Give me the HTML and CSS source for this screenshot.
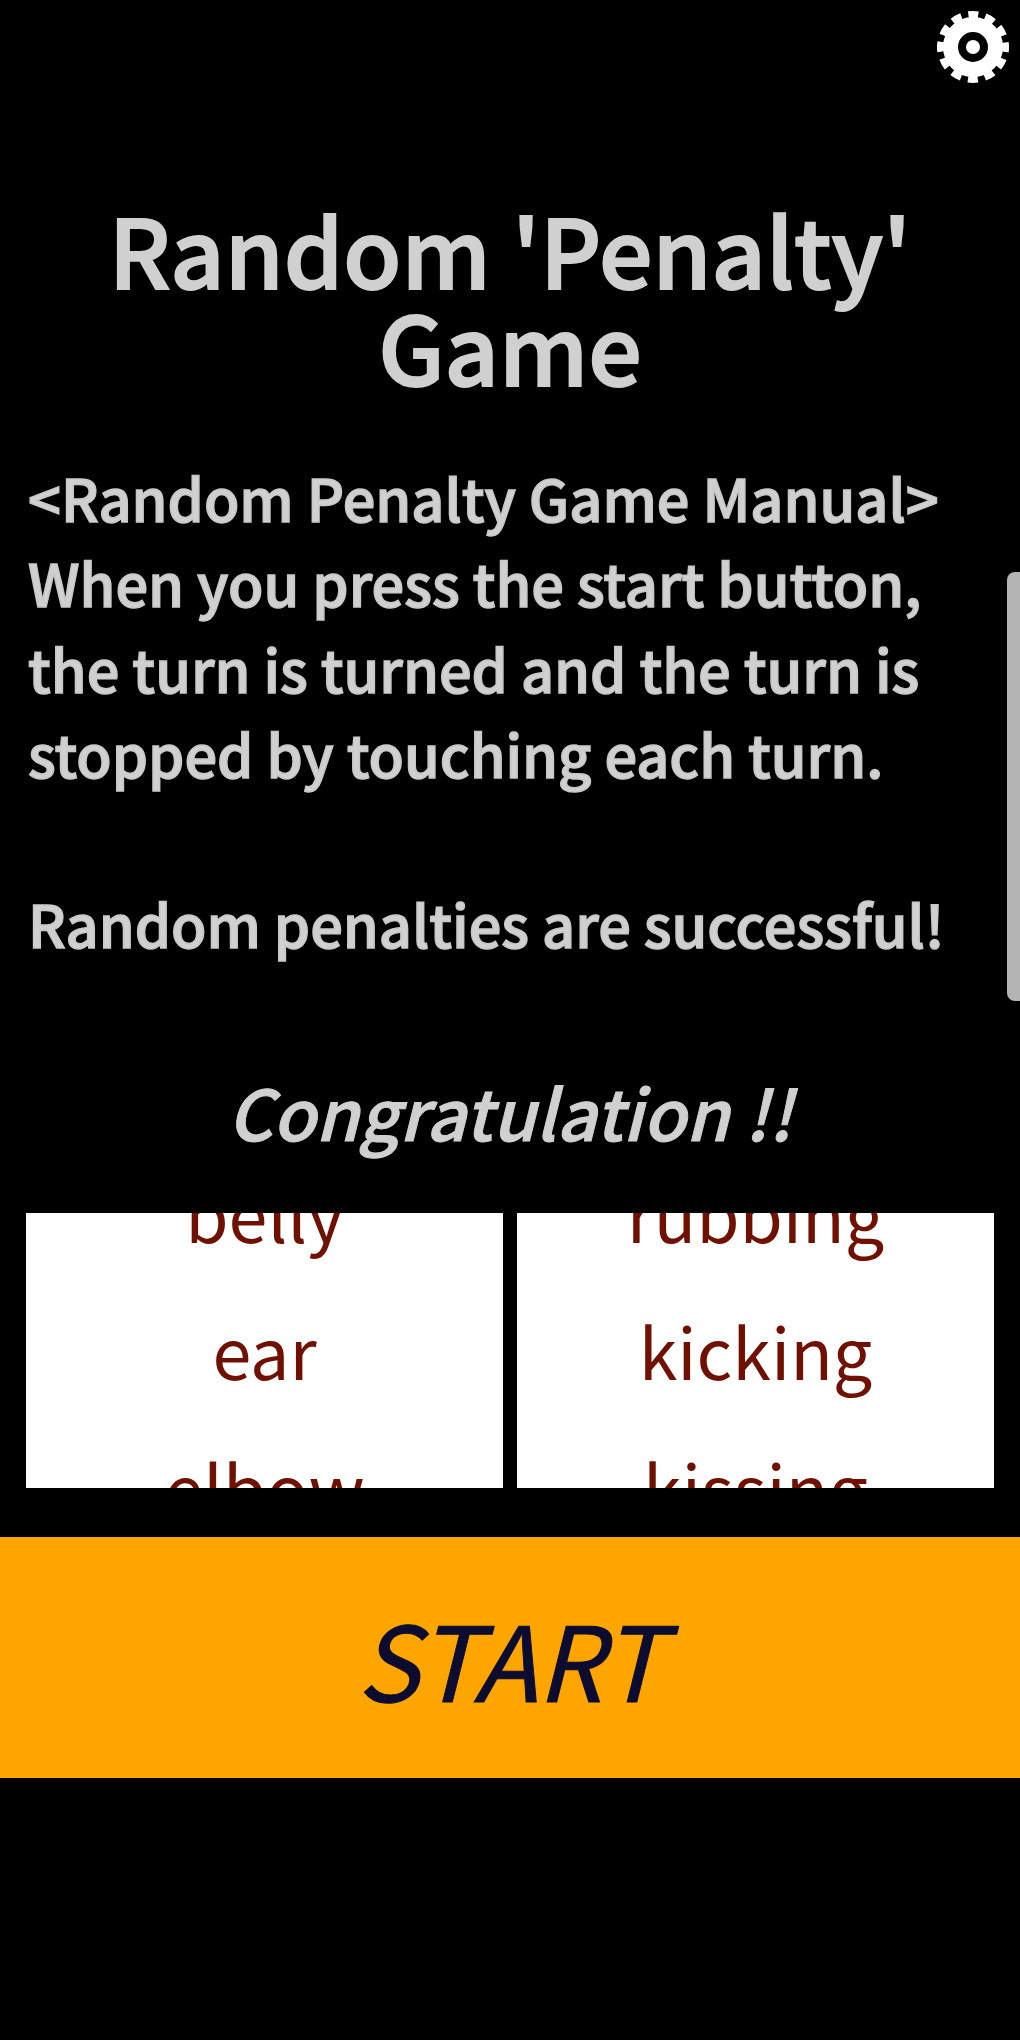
FILE: index.html
```html
<!DOCTYPE html>
<html lang="en">
<head>
    <meta charset="UTF-8">
    <meta name="viewport" content="width=device-width, initial-scale=1.0">
    <title>Random 'Penalty' Game</title>
    <link rel="stylesheet" href="styles.css">
</head>
<body>
    <header class="top-bar">
        <svg class="gear" viewBox="-36 -36 72 72">
            <circle r="32" fill="none" stroke="#fff" stroke-width="8" stroke-dasharray="9.76 7" stroke-dashoffset="4.88"/>
            <circle r="22.5" fill="none" stroke="#fff" stroke-width="15"/>
            <circle r="7" fill="#fff"/>
        </svg>
    </header>

    <h1 class="title">Random 'Penalty'<br>Game</h1>

    <div class="manual">
        &lt;Random Penalty Game Manual&gt;<br>
        When you press the start button,<br>
        the turn is turned and the turn is<br>
        stopped by touching each turn.<br><br>
        Random penalties are successful!
    </div>
    <div class="scroll-thumb"></div>

    <h2 class="result">Congratulation !!</h2>

    <div class="reels">
        <div class="reel">
            <div>belly</div>
            <div>ear</div>
            <div>elbow</div>
        </div>
        <div class="reel">
            <div>rubbing</div>
            <div>kicking</div>
            <div>kissing</div>
        </div>
    </div>

    <button class="start">START</button>
</body>
</html>
```

FILE: styles.css
```css
* {
    box-sizing: border-box;
}

body {
    margin: 0;
    height: 2040px;
    background: #000;
    color: #d0d0d0;
    font-family: "Noto Sans CJK KR", sans-serif;
    overflow: hidden;
}

.top-bar {
    display: flex;
    justify-content: flex-end;
    height: 199px;
    padding: 11px 11px 0 0;
}

.gear {
    width: 72px;
    height: 72px;
}

.title {
    margin: 0;
    font-size: 94.6px;
    font-weight: 500;
    line-height: 97px;
    text-align: center;
    -webkit-text-stroke: 2px #d0d0d0;
}

.manual {
    margin: 62px 0 0;
    padding-left: 28px;
    font-size: 57.7px;
    font-weight: 500;
    line-height: 85.3px;
    white-space: nowrap;
    -webkit-text-stroke: 1.5px #c8c8c8;
}

.scroll-thumb {
    position: absolute;
    top: 572px;
    right: -10px;
    width: 23px;
    height: 429px;
    border-radius: 8px;
    background: #b4b4b4;
}

.result {
    margin: 89px 0 0;
    height: 157px;
    font-size: 69.7px;
    font-style: italic;
    font-weight: 500;
    line-height: 110px;
    text-align: center;
    -webkit-text-stroke: 1px #d0d0d0;
}

.reels {
    display: flex;
    gap: 14px;
    height: 275px;
    padding: 0 26px;
}

.reel {
    flex: 1;
    display: flex;
    flex-direction: column;
    justify-content: center;
    padding-bottom: 2px;
    overflow: hidden;
    background: #fff;
    color: #701000;
    font-size: 70px;
    line-height: 137px;
    text-align: center;
}

.start {
    display: block;
    width: 100%;
    height: 241px;
    margin-top: 49px;
    border: 0;
    background: #ffa500;
    color: #0c0c30;
    font: italic 103.5px "Noto Sans CJK KR", sans-serif;
    -webkit-text-stroke: 1px #0c0c30;
}
```
